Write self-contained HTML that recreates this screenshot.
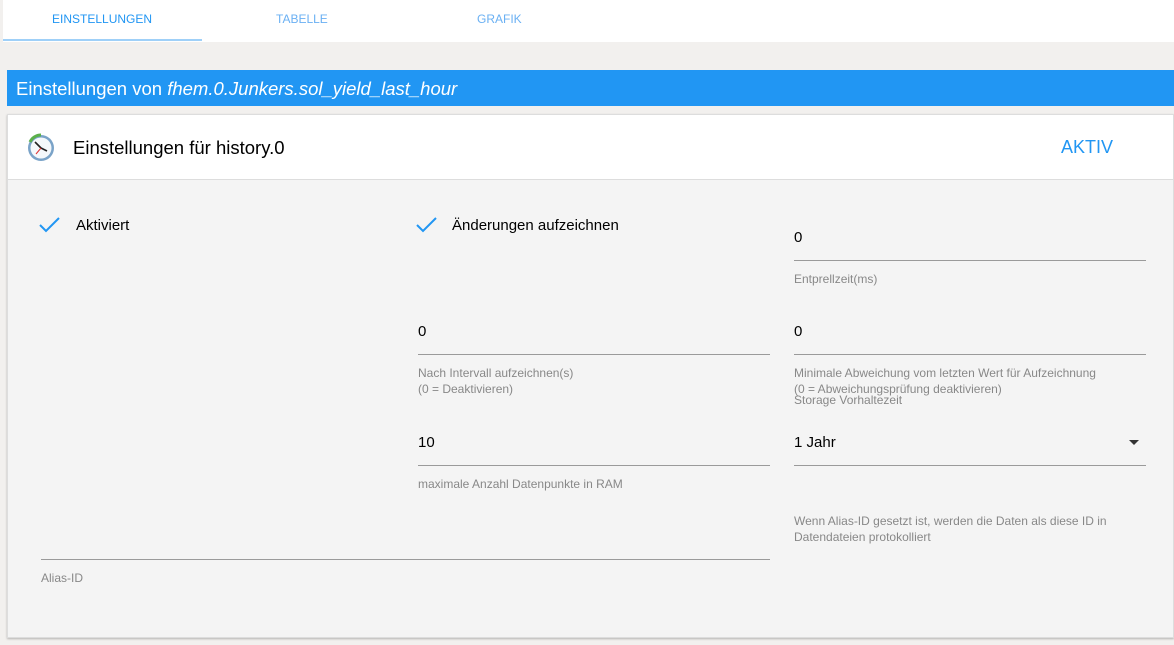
<!DOCTYPE html>
<html><head><meta charset="utf-8"><style>
*{margin:0;padding:0;box-sizing:border-box}
body{width:1174px;height:645px;background:#f2f0ee;font-family:"Liberation Sans",sans-serif;position:relative;overflow:hidden}
.abs{position:absolute}
.tabs{left:3px;top:0;width:1171px;height:42px;background:#fff}
.tab{top:12px;font-size:12px;color:#6ab0f3}
.bar{left:7px;top:70px;width:1167px;height:36px;background:#2196f3;color:#fff;font-size:18.5px;line-height:38px;padding-left:9px}
.card{left:7px;top:114px;width:1167px;height:524px;background:#f4f4f4;border:1px solid #ddd;box-shadow:0 1px 2px rgba(0,0,0,.25)}
.head{left:0;top:0;width:100%;height:65px;background:#fff;border-bottom:1px solid #ddd}
.t{font-size:15px;color:#000}
.lab{font-size:12px;color:#888;line-height:16px}
.line{height:1px;background:#9a9a9a}
</style></head><body>
<div class="abs tabs">
 <div class="abs tab" style="left:49px;color:#2196f3">EINSTELLUNGEN</div>
 <div class="abs tab" style="left:273px">TABELLE</div>
 <div class="abs tab" style="left:474px">GRAFIK</div>
 <div class="abs" style="left:0;top:39px;width:199px;height:2px;background:#9fd0f8"></div>
</div>
<div class="abs bar">Einstellungen von <i>fhem.0.Junkers.sol_yield_last_hour</i></div>
<div class="abs card">
 <div class="abs head">
  <svg class="abs" style="left:17px;top:17px" width="32" height="32" viewBox="0 0 32 32"><circle cx="16" cy="16" r="13" fill="#7aa3c8"/><circle cx="16" cy="16" r="10.5" fill="#f4f8fb"/><path d="M5 10 A12 12 0 0 1 16 3" stroke="#5bb04a" stroke-width="3" fill="none"/><path d="M16 16 L10 10 M16 16 L22 19" stroke="#222" stroke-width="1.6"/><path d="M16 16 L11 22" stroke="#d33" stroke-width="1"/></svg>
  <div class="abs" style="left:65px;top:22px;font-size:18.5px">Einstellungen für history.0</div>
  <div class="abs" style="left:1053px;top:22px;font-size:18px;color:#2196f3">AKTIV</div>
 </div>
 <svg class="abs" style="left:30px;top:100px" width="24" height="20"><path d="M2 10 L8 16 L21 3" stroke="#2196f3" stroke-width="2" fill="none"/></svg>
 <div class="abs t" style="left:68px;top:102px">Aktiviert</div>
 <svg class="abs" style="left:407px;top:100px" width="24" height="20"><path d="M2 10 L8 16 L21 3" stroke="#2196f3" stroke-width="2" fill="none"/></svg>
 <div class="abs t" style="left:444px;top:102px">Änderungen aufzeichnen</div>

 <div class="abs t" style="left:786px;top:114px">0</div>
 <div class="abs line" style="left:786px;top:145px;width:352px"></div>
 <div class="abs lab" style="left:786px;top:156px">Entprellzeit(ms)</div>

 <div class="abs t" style="left:410px;top:208px">0</div>
 <div class="abs line" style="left:410px;top:239px;width:352px"></div>
 <div class="abs lab" style="left:410px;top:250px">Nach Intervall aufzeichnen(s)<br>(0 = Deaktivieren)</div>

 <div class="abs t" style="left:786px;top:208px">0</div>
 <div class="abs line" style="left:786px;top:239px;width:352px"></div>
 <div class="abs lab" style="left:786px;top:250px">Minimale Abweichung vom letzten Wert für Aufzeichnung<br>(0 = Abweichungsprüfung deaktivieren)</div>
 <div class="abs lab" style="left:786px;top:277px">Storage Vorhaltezeit</div>

 <div class="abs t" style="left:410px;top:319px">10</div>
 <div class="abs line" style="left:410px;top:350px;width:352px"></div>
 <div class="abs lab" style="left:410px;top:361px">maximale Anzahl Datenpunkte in RAM</div>

 <div class="abs t" style="left:786px;top:319px">1 Jahr</div>
 <div class="abs" style="left:1121px;top:325px;width:0;height:0;border-left:5px solid transparent;border-right:5px solid transparent;border-top:5px solid #333"></div>
 <div class="abs line" style="left:786px;top:350px;width:352px"></div>
 <div class="abs lab" style="left:786px;top:398px">Wenn Alias-ID gesetzt ist, werden die Daten als diese ID in<br>Datendateien protokolliert</div>

 <div class="abs line" style="left:33px;top:444px;width:729px"></div>
 <div class="abs lab" style="left:33px;top:455px">Alias-ID</div>
</div>
</body></html>
